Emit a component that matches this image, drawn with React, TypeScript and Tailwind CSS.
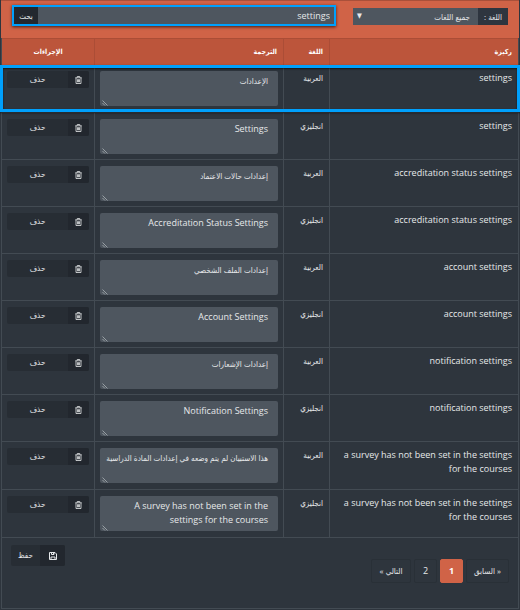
import React from "react";

type Lang = "ar" | "en";

interface Entry {
  key: string;
  lang: Lang;
  value: string;
}

const entries: Entry[] = [
  { key: "settings", lang: "ar", value: "الإعدادات" },
  { key: "settings", lang: "en", value: "Settings" },
  { key: "accreditation status settings", lang: "ar", value: "إعدادات حالات الاعتماد" },
  { key: "accreditation status settings", lang: "en", value: "Accreditation Status Settings" },
  { key: "account settings", lang: "ar", value: "إعدادات الملف الشخصي" },
  { key: "account settings", lang: "en", value: "Account Settings" },
  { key: "notification settings", lang: "ar", value: "إعدادات الإشعارات" },
  { key: "notification settings", lang: "en", value: "Notification Settings" },
  {
    key: "a survey has not been set in the settings for the courses",
    lang: "ar",
    value: "هذا الاستبيان لم يتم وضعه في إعدادات المادة الدراسية",
  },
  {
    key: "a survey has not been set in the settings for the courses",
    lang: "en",
    value: "A survey has not been set in the settings for the courses",
  },
];

const langNames: Record<Lang, string> = { ar: "العربية", en: "انجليزي" };

function TrashIcon() {
  return (
    <svg viewBox="0 0 14 16" className="h-2 w-[7px]" fill="none" stroke="currentColor" strokeWidth="1.6" aria-hidden="true">
      <path d="M0.5 3.5h13M4.5 3V1h5v2M2 4v11h10V4M5 6.5v6M7 6.5v6M9 6.5v6" />
    </svg>
  );
}

function SaveIcon() {
  return (
    <svg viewBox="0 0 16 16" className="size-2" fill="none" stroke="currentColor" strokeWidth="2" aria-hidden="true">
      <path d="M1 1h11l3 3v11H1z" />
      <path d="M4 15v-5h8v5" />
      <path d="M5 1v4h5V1" />
      <path d="M8 2h2v3H8z" fill="currentColor" stroke="none" />
    </svg>
  );
}

function Grip() {
  return (
    <svg viewBox="0 0 6 6" className="pointer-events-none absolute bottom-0 left-0.5 size-1.5 text-[#b9bec3]" stroke="currentColor" strokeWidth="0.7" aria-hidden="true">
      <path d="M0.5 0.5l5 5M0.5 3l2.5 2.5" />
    </svg>
  );
}

function Row({ entry, index }: { entry: Entry; index: number }) {
  const first = index === 0;
  const tall = first || entry.key.length > 40;
  const textStyle = entry.lang === "ar" ? "text-[8px] pl-0.5" : "text-[9px] pl-2";
  return (
    <tr className={`relative align-top ${tall ? "h-12" : "h-[47px]"}`}>
      <td className="border-b border-[#434b53] px-1.5 pt-1.5 text-[9px] leading-[14px]">
        {entry.key}
        {first && (
          <span className="pointer-events-none absolute -inset-x-0.5 top-0 bottom-px z-10 border-[3px] border-[#00a0fc] shadow-[0_1px_2px_rgba(0,0,0,0.6),inset_0_1px_2px_rgba(0,0,0,0.6)]" />
        )}
      </td>
      <td className="border-x border-b border-[#434b53] px-1.5 pt-1.5 text-[8px] leading-[14px]">{langNames[entry.lang]}</td>
      <td className="border-b border-[#434b53] px-[5px] pt-1.5">
        <div className="relative">
          <textarea
            aria-label={`${entry.key} – ${langNames[entry.lang]}`}
            defaultValue={entry.value}
            className={`block h-[35px] w-full resize-none overflow-hidden rounded-xs bg-[#4e565f] py-[3px] pr-2.5 leading-[14px] outline-none ${textStyle}`}
          />
          <Grip />
        </div>
      </td>
      <td className="border-r border-b border-[#434b53] px-[5px] pt-1.5">
        <button type="button" className="flex h-[17px] w-full overflow-hidden rounded-xs bg-[#272d34] text-[8px] leading-[16px]">
          <span className="flex h-full w-[21px] items-center justify-center bg-[#22272e]">
            <TrashIcon />
          </span>
          <span className="flex-1">حذف</span>
        </button>
      </td>
    </tr>
  );
}

const pageBase = "flex h-6 items-center justify-center rounded-xs border";

export default function App() {
  return (
    <div dir="rtl" lang="ar" className="bg-[#2e353d] px-px pb-px font-['Open_Sans','DejaVu_Sans_Condensed','DejaVu_Sans',sans-serif] text-[#e6e8ea]">
      <main className="border border-t-0 border-[#434b53]">
        <form className="-mx-px flex h-[38px] gap-[17px] border-t border-[#a9503a] bg-[#d06347] px-[11px] pt-1" onSubmit={(e) => e.preventDefault()}>
          <div className="mt-[3px] flex h-[17px] w-[155px] text-[8px]">
            <label htmlFor="language" className="flex w-[30px] items-center justify-center bg-[#2e353f]">
              اللغة :
            </label>
            <div className="relative flex-1">
              <select id="language" className="block h-full w-full appearance-none bg-[#4e565f] px-2 outline-none">
                <option>جميع اللغات</option>
              </select>
              <span className="pointer-events-none absolute top-0 left-1 text-[7px] leading-[16px]">▼</span>
            </div>
          </div>
          <div className="flex h-[21px] flex-1 border-2 border-[#00a0fc] shadow-[0_1px_3px_rgba(0,0,0,0.7)]">
            <input type="text" aria-label="بحث" defaultValue="settings" className="min-w-0 flex-1 bg-[#4e565f] px-1 text-[9px] outline-none" />
            <button type="submit" className="w-6 bg-[#23282f] text-[8px]">
              بحث
            </button>
          </div>
        </form>
        <table className="w-full table-fixed border-separate border-spacing-0 text-right">
          <thead>
            <tr className="h-[27px] bg-[#bc553b] text-[7px] text-white">
              <th className="border-t border-[#ab4d36] px-1.5 font-bold">ركيزة</th>
              <th className="w-[47px] border-x border-t border-[#ab4d36] px-1.5 font-bold">اللغة</th>
              <th className="w-[188px] border-t border-[#ab4d36] px-1.5 font-bold">الترجمة</th>
              <th className="w-[93px] border-t border-r border-[#ab4d36] text-center font-bold">الإجراءات</th>
            </tr>
          </thead>
          <tbody>
            {entries.map((entry, i) => (
              <Row key={i} entry={entry} index={i} />
            ))}
          </tbody>
        </table>
        <footer className="flex h-[70px] items-start justify-between px-[9px]">
          <nav aria-label="الصفحات" className="mt-[21px] flex gap-[3px] text-[8px]">
            <a href="#prev" className={`${pageBase} w-[43px] border-[#293037]`}>
              « السابق
            </a>
            <a href="#1" aria-current="page" className={`${pageBase} w-[23px] border-[#d06347] bg-[#d06347] text-[9px] font-bold text-white`}>
              1
            </a>
            <a href="#2" className={`${pageBase} w-[23px] border-[#293037] text-[9px]`}>
              2
            </a>
            <a href="#next" className={`${pageBase} w-10 border-[#293037]`}>
              التالي »
            </a>
          </nav>
          <button type="button" className="mt-[7px] flex h-[21px] overflow-hidden rounded-xs bg-[#272d34] text-[8px] leading-[20px]">
            <span className="flex h-full w-[25px] items-center justify-center bg-[#22272e]">
              <SaveIcon />
            </span>
            <span className="w-[29px]">حفظ</span>
          </button>
        </footer>
      </main>
    </div>
  );
}
